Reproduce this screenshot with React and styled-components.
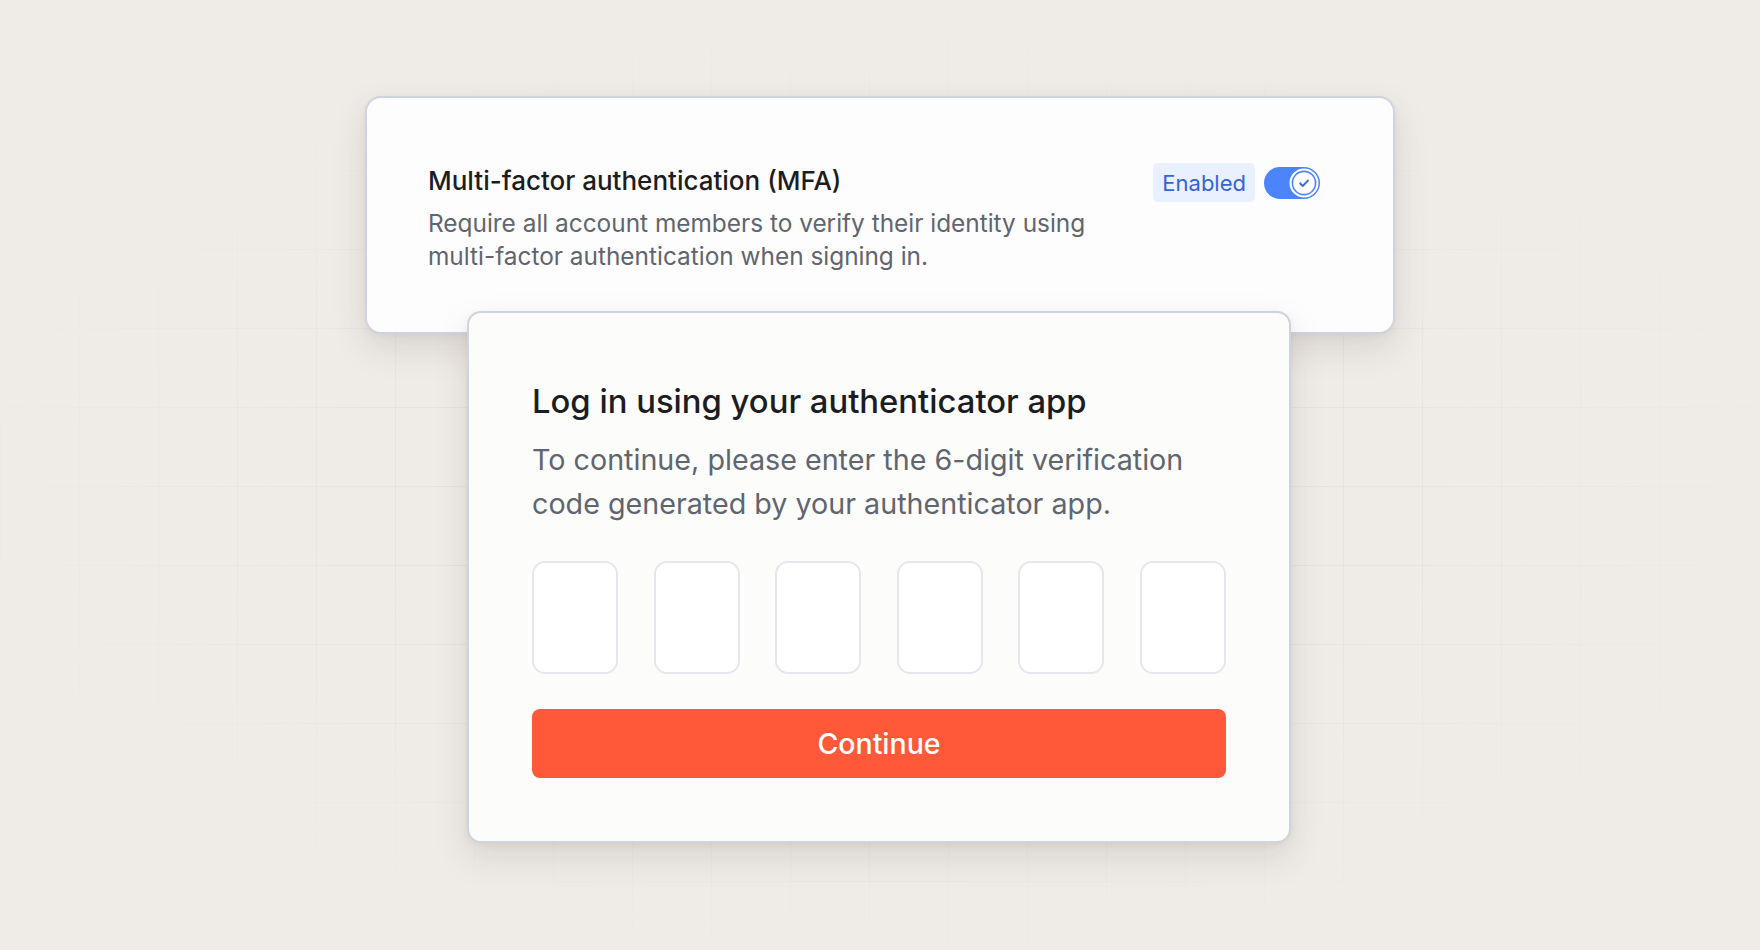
import React from "react";
import styled, { createGlobalStyle } from "styled-components";

const GlobalStyle = createGlobalStyle`
  html, body { margin: 0; padding: 0; }
  body {
    background: #efece8;
    font-family: Inter, "Noto Sans", "Liberation Sans", sans-serif;
    -webkit-font-smoothing: antialiased;
  }
  * { box-sizing: border-box; }
`;

const Page = styled.div`
  position: relative;
  width: 1760px;
  height: 950px;
  overflow: hidden;
  background: #efece8;
  display: flex;
  flex-direction: column;
  align-items: center;
  padding-top: 96px;

  &::before {
    content: "";
    position: absolute;
    inset: 0;
    background-image:
      linear-gradient(to right, rgba(120, 110, 100, 0.08) 1.5px, transparent 1.5px),
      linear-gradient(to bottom, rgba(120, 110, 100, 0.08) 1.5px, transparent 1.5px);
    background-size: 79px 79px;
    background-position: 0px 12px;
    -webkit-mask-image: radial-gradient(ellipse 55% 52% at 50% 52%, #000 35%, transparent 100%);
    mask-image: radial-gradient(ellipse 55% 52% at 50% 52%, #000 35%, transparent 100%);
    pointer-events: none;
  }
`;

const Card = styled.section`
  position: relative;
  z-index: ${(p) => p.$z};
  background: ${(p) => p.$bg};
  border: 2px solid #cfd3dd;
  border-radius: ${(p) => p.$radius}px;
  box-shadow: 0 14px 34px rgba(60, 50, 40, 0.13), 0 2px 6px rgba(60, 50, 40, 0.05);
`;

const SettingCard = styled(Card)`
  width: 1030px;
  height: 238px;
  padding: 67px 73px 0 61px;
  display: flex;
  align-items: flex-start;
`;

const LoginCard = styled(Card)`
  width: 824px;
  height: 532px;
  margin-top: -23px;
  margin-left: -2px;
  padding: 68px 63px 0 63px;
  display: flex;
  flex-direction: column;
`;

const TextBlock = styled.div`
  width: 690px;
  display: flex;
  flex-direction: column;
`;

const SettingTitle = styled.h2`
  margin: 0;
  font-size: 26px;
  line-height: 32px;
  font-weight: 450;
  color: #1b1d22;
`;

const SettingDesc = styled.p`
  margin: 10px 0 0;
  font-size: 24.4px;
  line-height: 32.5px;
  font-weight: 400;
  color: #60656f;
`;

const Controls = styled.div`
  margin-left: auto;
  margin-top: -2px;
  display: flex;
  align-items: center;
  gap: 9px;
`;

const Badge = styled.span`
  display: inline-flex;
  align-items: center;
  justify-content: center;
  height: 39px;
  padding: 0 9px;
  border-radius: 5px;
  background: #e9f0ff;
  color: #3464d6;
  font-size: 22px;
  font-weight: 400;
`;

const Track = styled.span`
  display: inline-flex;
  align-items: center;
  justify-content: flex-end;
  width: 56px;
  height: 32px;
  padding: 0 1px;
  border-radius: 16px;
  background: #4b84fb;
`;

const LoginTitle = styled.h1`
  margin: 0;
  font-size: 32.8px;
  line-height: 40px;
  font-weight: 450;
  color: #1b1d22;
`;

const LoginDesc = styled.p`
  margin: 17px 0 0;
  font-size: 28.7px;
  line-height: 44px;
  font-weight: 400;
  color: #60656f;
`;

const CodeRow = styled.div`
  margin-top: 35px;
  display: grid;
  grid-template-columns: repeat(6, 86px);
  justify-content: space-between;
`;

const CodeBox = styled.input`
  width: 86px;
  height: 113px;
  border: 2px solid #e6e7ec;
  border-radius: 13px;
  background: #ffffff;
  outline: none;
  font-family: inherit;
  font-size: 40px;
  text-align: center;
  color: #1b1d22;
`;

const ContinueButton = styled.button`
  margin-top: 35px;
  height: 69px;
  width: 100%;
  border: none;
  border-radius: 8px;
  background: #ff593a;
  color: #ffffff;
  font-family: inherit;
  font-size: 28.5px;
  font-weight: 450;
  cursor: pointer;
`;

function Knob() {
  return (
    <svg width="30" height="30" viewBox="0 0 30 30" aria-hidden="true">
      <circle cx="15" cy="15" r="14.5" fill="#ffffff" />
      <circle cx="15" cy="15" r="11.6" fill="#ffffff" stroke="#4b84fb" strokeWidth="1.6" />
      <path
        d="M11.2 15.4 L13.9 17.9 L18.9 12.6"
        fill="none"
        stroke="#3f70d9"
        strokeWidth="2.1"
        strokeLinecap="round"
        strokeLinejoin="round"
      />
    </svg>
  );
}

export default function App() {
  return (
    <>
      <GlobalStyle />
      <Page>
        <SettingCard $z={1} $bg="#fdfdfd" $radius={16}>
          <TextBlock>
            <SettingTitle>Multi-factor authentication (MFA)</SettingTitle>
            <SettingDesc>
              Require all account members to verify their identity using multi-factor
              authentication when signing in.
            </SettingDesc>
          </TextBlock>
          <Controls>
            <Badge>Enabled</Badge>
            <Track role="switch" aria-checked="true">
              <Knob />
            </Track>
          </Controls>
        </SettingCard>
        <LoginCard $z={2} $bg="#fcfcfb" $radius={14}>
          <LoginTitle>Log in using your authenticator app</LoginTitle>
          <LoginDesc>
            To continue, please enter the 6-digit verification code generated by your
            authenticator app.
          </LoginDesc>
          <CodeRow>
            {[0, 1, 2, 3, 4, 5].map((i) => (
              <CodeBox key={i} maxLength={1} aria-label={`Digit ${i + 1}`} />
            ))}
          </CodeRow>
          <ContinueButton>Continue</ContinueButton>
        </LoginCard>
      </Page>
    </>
  );
}
